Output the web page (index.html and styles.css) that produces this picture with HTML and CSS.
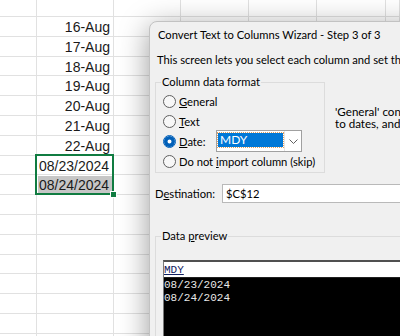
FILE: index.html
```html
<!DOCTYPE html>
<html lang="en">
<head>
  <meta charset="UTF-8" />
  <title>Convert Text to Columns</title>
  <link rel="stylesheet" href="styles.css">
</head>
<body>
  <div class="sheet">
    <div class="row row-top"><div class="cell ca"></div><div class="cell cb"></div><div class="cell cc"></div><div class="cell cd"></div><div class="cell ce"></div><div class="cell cf"></div><div class="cell cg"></div></div>
    <div class="row"><div class="cell ca"></div><div class="cell cb num">16-Aug</div><div class="cell cc"></div><div class="cell cd"></div><div class="cell ce"></div><div class="cell cf"></div><div class="cell cg"></div></div>
    <div class="row"><div class="cell ca"></div><div class="cell cb num">17-Aug</div><div class="cell cc"></div><div class="cell cd"></div><div class="cell ce"></div><div class="cell cf"></div><div class="cell cg"></div></div>
    <div class="row"><div class="cell ca"></div><div class="cell cb num">18-Aug</div><div class="cell cc"></div><div class="cell cd"></div><div class="cell ce"></div><div class="cell cf"></div><div class="cell cg"></div></div>
    <div class="row"><div class="cell ca"></div><div class="cell cb num">19-Aug</div><div class="cell cc"></div><div class="cell cd"></div><div class="cell ce"></div><div class="cell cf"></div><div class="cell cg"></div></div>
    <div class="row"><div class="cell ca"></div><div class="cell cb num">20-Aug</div><div class="cell cc"></div><div class="cell cd"></div><div class="cell ce"></div><div class="cell cf"></div><div class="cell cg"></div></div>
    <div class="row"><div class="cell ca"></div><div class="cell cb num">21-Aug</div><div class="cell cc"></div><div class="cell cd"></div><div class="cell ce"></div><div class="cell cf"></div><div class="cell cg"></div></div>
    <div class="row"><div class="cell ca"></div><div class="cell cb num">22-Aug</div><div class="cell cc"></div><div class="cell cd"></div><div class="cell ce"></div><div class="cell cf"></div><div class="cell cg"></div></div>
    <div class="row"><div class="cell ca"></div><div class="cell cb txt">08/23/2024</div><div class="cell cc"></div><div class="cell cd"></div><div class="cell ce"></div><div class="cell cf"></div><div class="cell cg"></div></div>
    <div class="row"><div class="cell ca"></div><div class="cell cb txt"><span class="sel-fill">08/24/2024</span></div><div class="cell cc"></div><div class="cell cd"></div><div class="cell ce"></div><div class="cell cf"></div><div class="cell cg"></div></div>
    <div class="row"><div class="cell ca"></div><div class="cell cb"></div><div class="cell cc"></div><div class="cell cd"></div><div class="cell ce"></div><div class="cell cf"></div><div class="cell cg"></div></div>
    <div class="row"><div class="cell ca"></div><div class="cell cb"></div><div class="cell cc"></div><div class="cell cd"></div><div class="cell ce"></div><div class="cell cf"></div><div class="cell cg"></div></div>
    <div class="row"><div class="cell ca"></div><div class="cell cb"></div><div class="cell cc"></div><div class="cell cd"></div><div class="cell ce"></div><div class="cell cf"></div><div class="cell cg"></div></div>
    <div class="row"><div class="cell ca"></div><div class="cell cb"></div><div class="cell cc"></div><div class="cell cd"></div><div class="cell ce"></div><div class="cell cf"></div><div class="cell cg"></div></div>
    <div class="row"><div class="cell ca"></div><div class="cell cb"></div><div class="cell cc"></div><div class="cell cd"></div><div class="cell ce"></div><div class="cell cf"></div><div class="cell cg"></div></div>
    <div class="row"><div class="cell ca"></div><div class="cell cb"></div><div class="cell cc"></div><div class="cell cd"></div><div class="cell ce"></div><div class="cell cf"></div><div class="cell cg"></div></div>
    <div class="row"><div class="cell ca"></div><div class="cell cb"></div><div class="cell cc"></div><div class="cell cd"></div><div class="cell ce"></div><div class="cell cf"></div><div class="cell cg"></div></div>
    <div class="row"><div class="cell ca"></div><div class="cell cb"></div><div class="cell cc"></div><div class="cell cd"></div><div class="cell ce"></div><div class="cell cf"></div><div class="cell cg"></div></div>

    <div class="selection"><span class="fill-handle"></span></div>
  </div>

  <div class="dialog">
    <div class="title">Convert Text to Columns Wizard - Step 3 of 3</div>
    <p class="desc">This screen lets you select each column and set the Data Format.</p>

    <div class="format-area">
      <fieldset class="group format">
        <legend>Column data format</legend>
        <label class="opt"><span class="radio"></span><span><u>G</u>eneral</span></label>
        <label class="opt"><span class="radio"></span><span><u>T</u>ext</span></label>
        <label class="opt"><span class="radio on"></span><span class="date-label"><u>D</u>ate:</span>
          <span class="combo">
            <span class="combo-field"><span class="combo-value">MDY</span></span>
            <span class="combo-btn">
              <svg width="9" height="5" viewBox="0 0 9 5"><path d="M0.5 0.5 L4.5 4.5 L8.5 0.5" fill="none" stroke="#606060" stroke-width="1"/></svg>
            </span>
          </span>
        </label>
        <label class="opt"><span class="radio"></span><span>Do not <u>i</u>mport column (skip)</span></label>
      </fieldset>
      <p class="hint">'General' converts numeric values to numbers, date values<br>to dates, and all remaining values to text.</p>
    </div>

    <div class="dest">
      <span class="dest-label">D<u>e</u>stination:</span>
      <span class="dest-input">$C$12</span>
    </div>

    <fieldset class="group preview-group">
      <legend>Data <u>p</u>review</legend>
      <div class="preview">
        <div class="preview-head"><span>MDY</span></div>
        <div class="preview-body">08/23/2024<br>08/24/2024</div>
      </div>
    </fieldset>
  </div>
</body>
</html>
```

FILE: styles.css
```css
body {
  margin: 0;
  width: 400px;
  height: 336px;
  overflow: hidden;
  position: relative;
  background: #ffffff;
  font-family: 'Liberation Sans', Arial, sans-serif;
}

/* spreadsheet */

.sheet {
  position: relative;
}

.row {
  display: flex;
  height: 19.8px;
  box-sizing: border-box;
}

.row-top {
  height: 17px;
}

.cell {
  box-sizing: border-box;
  height: 100%;
  border-right: 1px solid #e1e1e1;
  border-bottom: 1px solid #e1e1e1;
  font-size: 14px;
  line-height: 18px;
  color: #1a1a1a;
  white-space: nowrap;
}

.ca { width: 37px; }
.cb { width: 77px; }
.cc { width: 67px; }
.cd { width: 68px; }
.ce { width: 68px; }
.cf { width: 69px; }
.cg { flex: 1; }

.num {
  text-align: right;
  padding: 1px 3px 0 0;
}

.txt {
  padding: 1px 0 0 2px;
}

.sel-fill {
  display: block;
  margin: 0 1px 0 -1px;
  padding-left: 1px;
  background: #c6c6c6;
}

.selection {
  position: absolute;
  left: 35px;
  top: 154px;
  width: 75px;
  height: 37px;
  border: 2px solid #107c41;
}

.fill-handle {
  position: absolute;
  right: -5px;
  bottom: -5px;
  width: 5px;
  height: 5px;
  background: #107c41;
  border: 1px solid #ffffff;
}

/* dialog */

.dialog {
  position: absolute;
  left: 149px;
  top: 21px;
  width: 300px;
  height: 380px;
  box-sizing: border-box;
  background: #f0f0f0;
  border: 1px solid #c2c2c2;
  border-radius: 8px 8px 0 0;
  box-shadow: 0 6px 30px rgba(0, 0, 0, 0.4);
  font-family: Lato, 'Noto Sans', sans-serif;
  font-size: 11.2px;
  color: #000000;
  white-space: nowrap;
}

.title {
  height: 25px;
  line-height: 25px;
  padding-left: 8px;
}

.desc {
  margin: 5px 0 0 7px;
  line-height: 16px;
}

.format-area {
  display: flex;
  align-items: flex-start;
  margin-top: 6px;
}

.group {
  margin: 0 0 0 5px;
  border: 1px solid #dcdcdc;
  padding: 1px 0 1px 7px;
}

.group legend {
  padding: 0 1px;
  margin-left: -2px;
  line-height: 16px;
}

.format {
  box-sizing: border-box;
  width: 170px;
  flex-shrink: 0;
}

.opt {
  display: flex;
  align-items: center;
  height: 20px;
}

.radio {
  width: 11px;
  height: 11px;
  border: 1px solid #5f5f5f;
  border-radius: 50%;
  background: #f7f7f7;
  margin-right: 3px;
  flex-shrink: 0;
}

.radio.on {
  border-color: #005fb8;
  background: #ffffff;
  box-shadow: inset 0 0 0 3.5px #005fb8;
}

.date-label {
  width: 37px;
}

.combo {
  display: flex;
  width: 86px;
  height: 22px;
  box-sizing: border-box;
  border: 1px solid #a0a0a0;
  background: #ffffff;
}

.combo-field {
  flex: 1;
  padding: 2px 1px;
}

.combo-value {
  display: block;
  height: 14px;
  line-height: 14px;
  font-size: 12px;
  background: #0078d7;
  color: #ffffff;
  padding-left: 2px;
  outline: 1px dotted #e0a060;
}

.combo-btn {
  width: 16px;
  border-left: 1px solid #e5e5e5;
  display: flex;
  align-items: center;
  justify-content: center;
}

.hint {
  margin: 32px 0 0 10px;
  line-height: 12px;
  font-size: 11.6px;
}

.dest {
  display: flex;
  align-items: center;
  margin: 11px 0 0 5px;
  height: 19px;
}

.dest-label {
  width: 67px;
}

.dest-input {
  flex: 1;
  height: 19px;
  box-sizing: border-box;
  border: 1px solid #b9b9b9;
  border-right: none;
  background: #ffffff;
  padding-left: 3px;
  line-height: 17px;
}

.preview-group {
  margin-top: 25px;
  padding: 16px 0 0 7px;
  border-right: none;
  border-bottom: none;
  height: 120px;
}

.preview {
  border: 1px solid #7a7a7a;
  border-right: none;
  border-top: 2px solid #505050;
  background: #000000;
  height: 100px;
}

.preview-head {
  background: #ffffff;
  height: 15px;
  border-bottom: 1px solid #202020;
  font-family: 'Liberation Mono', monospace;
  font-size: 11px;
  line-height: 16px;
  color: #102060;
}

.preview-head span {
  text-decoration: underline;
}

.preview-body {
  font-family: 'Liberation Mono', monospace;
  font-size: 11px;
  line-height: 13px;
  padding-top: 1px;
  color: #e8e8e8;
}
```
